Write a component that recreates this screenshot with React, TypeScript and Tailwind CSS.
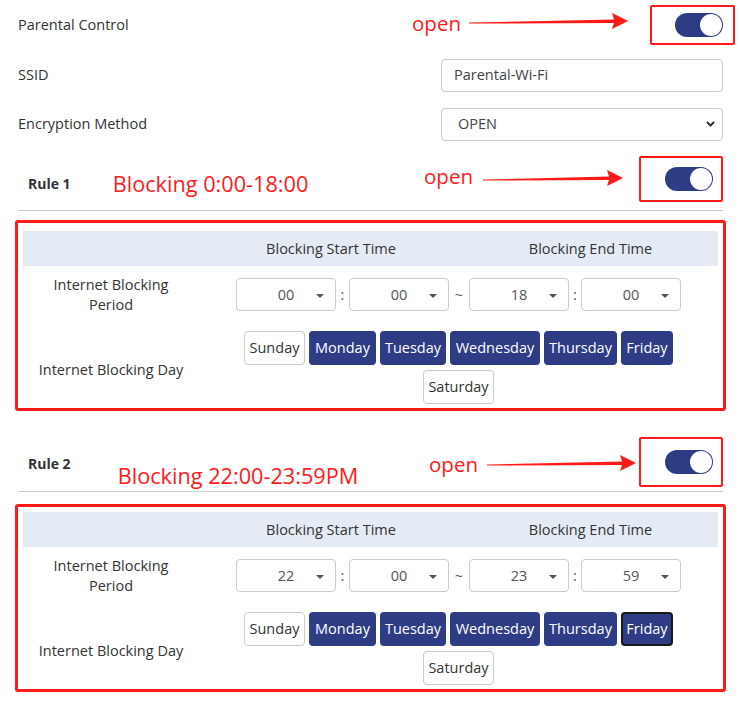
import React from "react";

const days = [
  { label: "Sunday", w: "w-[61px]" },
  { label: "Monday", w: "w-[67px]" },
  { label: "Tuesday", w: "w-[66px]" },
  { label: "Wednesday", w: "w-[90px]" },
  { label: "Thursday", w: "w-[73px]" },
  { label: "Friday", w: "w-[52px]" },
  { label: "Saturday", w: "w-[71px]" },
];

function Toggle() {
  return (
    <div className="w-[48px] h-[24px] rounded-full bg-[#2e3b85] flex items-center justify-end pr-[1px]">
      <div className="w-[22px] h-[22px] rounded-full bg-white" />
    </div>
  );
}

function Arrow({ width }: { width: number }) {
  const h = 20;
  const tip = width - 1;
  const back = width - 17;
  return (
    <svg width={width} height={h} viewBox={`0 0 ${width} ${h}`}>
      <polygon
        points={`1,11.6 ${back + 2},8.4 ${back},2 ${tip},10 ${back},18 ${back + 2},12 1,12.6`}
        fill="#ff1a1a"
      />
    </svg>
  );
}

function TimeSelect({ value }: { value: string }) {
  return (
    <div className="relative w-[100px] h-[33px] rounded-[4px] border border-[#cccccc] bg-white flex items-center justify-center text-[#555]">
      <span>{value}</span>
      <svg
        className="absolute right-[11px] top-[15px]"
        width="8"
        height="4"
        viewBox="0 0 8 4"
      >
        <polygon points="0,0 8,0 4,4" fill="#555" />
      </svg>
    </div>
  );
}

function RuleBox({
  times,
  focused,
  top,
}: {
  times: string[];
  focused?: string;
  top: string;
}) {
  return (
    <div
      className={`-mx-[3px] border-[3px] border-[#ff1a1a] rounded-[3px] px-[5px] pb-[4px] ${top}`}
    >
      <div className="grid grid-cols-[176px_264px_1fr] h-[35px] items-center bg-[#e4ebf5] text-[#333]">
        <div />
        <div className="text-center">Blocking Start Time</div>
        <div className="text-center">Blocking End Time</div>
      </div>
      <div className="grid grid-cols-[176px_1fr] h-[57px] items-center">
        <div className="text-center leading-[20px] text-[#333]">
          Internet Blocking
          <br />
          Period
        </div>
        <div className="flex items-center justify-center">
          <TimeSelect value={times[0]} />
          <span className="w-[13px] text-center text-[#555]">:</span>
          <TimeSelect value={times[1]} />
          <span className="w-[20px] text-center text-[#555]">~</span>
          <TimeSelect value={times[2]} />
          <span className="w-[12px] text-center text-[#555]">:</span>
          <TimeSelect value={times[3]} />
        </div>
      </div>
      <div className="grid grid-cols-[176px_1fr] pt-[8px]">
        <div className="flex items-center justify-center pt-[5px] text-[#333]">
          Internet Blocking Day
        </div>
        <div className="w-[445px] mx-auto flex flex-wrap justify-center gap-x-[4px] gap-y-[5px]">
          {days.map((d) => {
            const on = d.label !== "Sunday" && d.label !== "Saturday";
            const isFocus = focused === d.label;
            return (
              <div
                key={d.label}
                className={`${d.w} h-[34px] rounded-[4px] flex items-center justify-center ${
                  on
                    ? "bg-[#2e3b85] text-white"
                    : "bg-white border border-[#cccccc] text-[#333]"
                } ${isFocus ? "border-2 border-[#1a1a1a]" : ""}`}
              >
                {d.label}
              </div>
            );
          })}
        </div>
      </div>
    </div>
  );
}

export default function App() {
  return (
    <div
      className="w-[742px] h-[703px] bg-white pl-[18px] pr-[19px] text-[14.5px] text-[#333] overflow-hidden"
      style={{ fontFamily: '"Open Sans", "Noto Sans", sans-serif' }}
    >
      {/* parental control */}
      <div className="h-[50px] flex items-center">
        <span className="flex-1">Parental Control</span>
        <span className="text-[20.5px] text-[#ff1a1a] mb-[4px]">open</span>
        <div className="ml-[7px] mb-[8px]">
          <Arrow width={161} />
        </div>
        <div className="ml-[21px] -mr-[12px] w-[85px] h-[40px] border-[2px] border-[#ff1a1a] rounded-[2px] flex items-center justify-end pr-[10px]">
          <Toggle />
        </div>
      </div>

      <div className="h-[50px] flex items-center">
        <span className="flex-1">SSID</span>
        <div className="w-[282px] h-[33px] rounded-[4px] border border-[#cccccc] flex items-center px-[12px] text-[#444]">
          Parental-Wi-Fi
        </div>
      </div>

      <div className="h-[48px] flex items-center">
        <span className="flex-1">Encryption Method</span>
        <div className="w-[282px] h-[33px] rounded-[4px] border border-[#cccccc] flex items-center justify-between pl-[16px] pr-[7px] text-[#444]">
          <span>OPEN</span>
          <svg width="9" height="6" viewBox="0 0 9 6">
            <polyline
              points="1,1 4.5,4.5 8,1"
              fill="none"
              stroke="#333"
              strokeWidth="2"
            />
          </svg>
        </div>
      </div>

      {/* rule 1 */}
      <div className="h-[63px] border-b border-[#cccccc] flex items-center">
        <span className="pl-[10px] font-bold text-[14px] text-[#333] mt-[8px]">
          Rule 1
        </span>
        <span className="ml-[42px] text-[21.7px] text-[#ff1a1a] mt-[10px]">
          Blocking 0:00-18:00
        </span>
        <span className="flex-1" />
        <span className="text-[20.5px] text-[#ff1a1a] mb-[6px]">open</span>
        <div className="ml-[9px] mb-[2px]">
          <Arrow width={142} />
        </div>
        <div className="ml-[15px] w-[84px] h-[46px] border-[2px] border-[#ff1a1a] rounded-[2px] flex items-center justify-end pr-[8px]">
          <Toggle />
        </div>
      </div>

      <RuleBox times={["00", "00", "18", "00"]} top="mt-[9px] pt-[8px]" />

      {/* rule 2 */}
      <div className="mt-[18px] h-[63px] border-b border-[#cccccc] flex items-center">
        <span className="pl-[10px] font-bold text-[14px] text-[#333] mt-[6px]">
          Rule 2
        </span>
        <span className="ml-[47px] text-[21.7px] text-[#ff1a1a] mt-[33px]">
          Blocking 22:00-23:59PM
        </span>
        <span className="flex-1" />
        <span className="text-[20.5px] text-[#ff1a1a] mt-[8px]">open</span>
        <div className="ml-[8px] mt-[6px]">
          <Arrow width={151} />
        </div>
        <div className="ml-[2px] w-[84px] h-[50px] mt-[4px] border-[2px] border-[#ff1a1a] rounded-[2px] flex items-center justify-end pr-[8px]">
          <Toggle />
        </div>
      </div>

      <RuleBox
        times={["22", "00", "23", "59"]}
        focused="Friday"
        top="mt-[12px] pt-[5px]"
      />
    </div>
  );
}
